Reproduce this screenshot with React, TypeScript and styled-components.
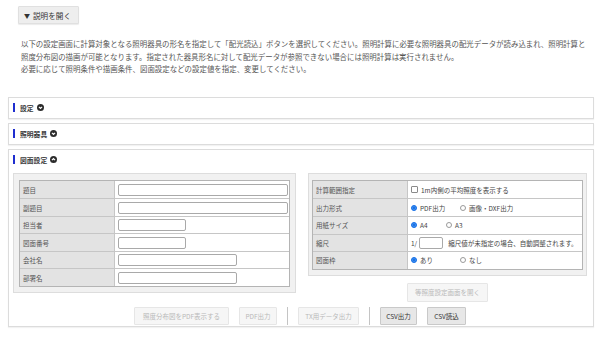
import styled, { createGlobalStyle } from 'styled-components';

const GlobalStyle = createGlobalStyle`
  * { box-sizing: border-box; }
  body {
    margin: 0;
    background: #fff;
    font-family: "Noto Sans CJK JP", "Noto Sans", sans-serif;
    color: #444;
  }
`;

const ChevronCircle = ({ up }: { up?: boolean }) => (
  <svg width="7" height="7" viewBox="0 0 8 8">
    <circle cx="4" cy="4" r="4" fill="#2b2b2b" />
    <polyline
      points={up ? '2.2,4.8 4,3 5.8,4.8' : '2.2,3.2 4,5 5.8,3.2'}
      fill="none"
      stroke="#fff"
      strokeWidth="1.3"
    />
  </svg>
);

const Page = styled.div`
  padding-top: 6px;
`;

const ToggleButton = styled.button`
  display: flex;
  align-items: center;
  gap: 3px;
  margin-left: 18px;
  width: 61px;
  height: 18px;
  padding: 0 0 0 5px;
  border: 1px solid #e0e0e0;
  border-radius: 1px;
  background: #eeeeee;
  box-shadow: 0 1px 1px rgba(0, 0, 0, 0.08);
  font-family: inherit;
  font-size: 7.6px;
  color: #333;
`;

const Arrow = styled.span`
  font-size: 6px;
`;

const Description = styled.p`
  margin: 14px 0 21px 21px;
  font-size: 7.45px;
  line-height: 12.6px;
  color: #555;
  white-space: nowrap;
`;

const Panel = styled.section`
  margin: 0 6px 4px 8px;
  border: 1px solid #dcdcdc;
  background: #fff;
  box-shadow: 0 1px 1px rgba(0, 0, 0, 0.05);
`;

const PanelHeader = styled.div`
  display: flex;
  align-items: center;
  height: 20px;
  padding-left: 4px;
`;

const Bar = styled.span`
  width: 2px;
  height: 9px;
  margin-right: 5px;
  background: #1f2ecf;
`;

const PanelTitle = styled.span`
  font-size: 6.8px;
  font-weight: 700;
  color: #3a3a3a;
  margin-right: 3px;
`;

const PanelBody = styled.div`
  padding: 3px 6px 1px 4px;
`;

const Columns = styled.div`
  display: grid;
  grid-template-columns: 283px 279px;
  column-gap: 12px;
  align-items: start;
`;

const Column = styled.div`
  display: flex;
  flex-direction: column;
  align-items: center;
`;

const GroupBox = styled.div<{ $inset: number }>`
  width: 100%;
  padding: 6px ${p => p.$inset}px 5px;
  background: #f1f1f1;
  border: 1px solid #dddddd;
`;

const FormTable = styled.div`
  border: 1px solid #b4b4b4;
  background: #fff;
`;

const FormRow = styled.div<{ $h: number }>`
  display: grid;
  grid-template-columns: 95px 1fr;
  height: ${p => p.$h}px;
  & + & {
    border-top: 1px solid #c6c6c6;
  }
`;

const Label = styled.div`
  display: flex;
  align-items: center;
  padding-left: 3px;
  background: #e3e3e3;
  border-right: 1px solid #c6c6c6;
  font-size: 6.5px;
  color: #555;
`;

const Value = styled.div`
  display: flex;
  align-items: center;
  padding-left: 3px;
  font-size: 6.5px;
  color: #444;
`;

const TextInput = styled.span<{ $w: number }>`
  display: block;
  width: ${p => p.$w}px;
  height: 12px;
  background: #fff;
  border: 1px solid #a9a9a9;
  border-radius: 2px;
`;

const Option = styled.span<{ $w?: number }>`
  display: inline-flex;
  align-items: center;
  gap: 3px;
  min-width: ${p => p.$w ?? 0}px;
  color: #444;
`;

const Radio = styled.span<{ $on?: boolean }>`
  width: 6px;
  height: 6px;
  border-radius: 50%;
  border: 1px solid ${p => (p.$on ? '#1a73e8' : '#9a9a9a')};
  background: ${p => (p.$on ? '#1a73e8' : '#fff')};
  box-shadow: ${p => (p.$on ? 'inset 0 0 0 0.6px #5aa0f0' : 'none')};
`;

const Check = styled.span`
  width: 7px;
  height: 7px;
  border: 1px solid #8a8a8a;
  border-radius: 1px;
  background: #fff;
`;

const Scale = styled.span`
  margin-right: 2px;
`;

const Hint = styled.span`
  margin-left: 5px;
`;

const Button = styled.button<{ $w: number; $h?: number; $off?: boolean }>`
  width: ${p => p.$w}px;
  height: ${p => p.$h ?? 18}px;
  padding: 0;
  font-family: inherit;
  font-size: 6.5px;
  border-radius: 1px;
  border: 1px solid ${p => (p.$off ? '#e6e6e6' : '#c9c9c9')};
  background: ${p => (p.$off ? '#f6f6f6' : '#e7e7e7')};
  color: ${p => (p.$off ? '#b9b9b9' : '#333')};
`;

const SubButton = styled(Button)`
  margin-top: 7px;
`;

const ActionRow = styled.div`
  display: flex;
  justify-content: center;
  align-items: center;
  gap: 10px;
  margin-top: 5px;
`;

const Divider = styled.span`
  width: 1px;
  height: 18px;
  background: #c4c4c4;
`;

const leftRows: { label: string; w: number }[] = [
  { label: '題目', w: 170 },
  { label: '副題目', w: 170 },
  { label: '担当者', w: 68 },
  { label: '図面番号', w: 68 },
  { label: '会社名', w: 119 },
  { label: '部署名', w: 119 },
];

export default function App() {
  return (
    <Page>
      <GlobalStyle />
      <ToggleButton>
        <Arrow>▼</Arrow>説明を開く
      </ToggleButton>

      <Description>
        以下の設定画面に計算対象となる照明器具の形名を指定して「配光読込」ボタンを選択してください。照明計算に必要な照明器具の配光データが読み込まれ、照明計算と
        <br />
        照度分布図の描画が可能となります。指定された器具形名に対して配光データが参照できない場合には照明計算は実行されません。
        <br />
        必要に応じて照明条件や描画条件、図面設定などの設定値を指定、変更してください。
      </Description>

      <Panel>
        <PanelHeader>
          <Bar />
          <PanelTitle>設定</PanelTitle>
          <ChevronCircle />
        </PanelHeader>
      </Panel>

      <Panel>
        <PanelHeader>
          <Bar />
          <PanelTitle>照明器具</PanelTitle>
          <ChevronCircle />
        </PanelHeader>
      </Panel>

      <Panel>
        <PanelHeader>
          <Bar />
          <PanelTitle>図面設定</PanelTitle>
          <ChevronCircle up />
        </PanelHeader>
        <PanelBody>
          <Columns>
            <Column>
              <GroupBox $inset={5}>
                <FormTable>
                  {leftRows.map(row => (
                    <FormRow key={row.label} $h={17.5}>
                      <Label>{row.label}</Label>
                      <Value>
                        <TextInput $w={row.w} />
                      </Value>
                    </FormRow>
                  ))}
                </FormTable>
              </GroupBox>
            </Column>

            <Column>
              <GroupBox $inset={3}>
                <FormTable>
                  <FormRow $h={17.6}>
                    <Label>計算範囲指定</Label>
                    <Value>
                      <Option>
                        <Check />
                        1m内側の平均照度を表示する
                      </Option>
                    </Value>
                  </FormRow>
                  <FormRow $h={17.6}>
                    <Label>出力形式</Label>
                    <Value>
                      <Option $w={49}>
                        <Radio $on />
                        PDF出力
                      </Option>
                      <Option>
                        <Radio />
                        画像・DXF出力
                      </Option>
                    </Value>
                  </FormRow>
                  <FormRow $h={17.6}>
                    <Label>用紙サイズ</Label>
                    <Value>
                      <Option $w={35}>
                        <Radio $on />
                        A4
                      </Option>
                      <Option>
                        <Radio />
                        A3
                      </Option>
                    </Value>
                  </FormRow>
                  <FormRow $h={17.6}>
                    <Label>縮尺</Label>
                    <Value>
                      <Scale>1/</Scale>
                      <TextInput $w={24} />
                      <Hint>縮尺値が未指定の場合、自動調整されます。</Hint>
                    </Value>
                  </FormRow>
                  <FormRow $h={17.6}>
                    <Label>図面枠</Label>
                    <Value>
                      <Option $w={49}>
                        <Radio $on />
                        あり
                      </Option>
                      <Option>
                        <Radio />
                        なし
                      </Option>
                    </Value>
                  </FormRow>
                </FormTable>
              </GroupBox>
              <SubButton $w={81} $h={19} $off>
                等照度設定画面を開く
              </SubButton>
            </Column>
          </Columns>

          <ActionRow>
            <Button $w={95} $off>照度分布図をPDF表示する</Button>
            <Button $w={38} $off>PDF出力</Button>
            <Divider />
            <Button $w={61} $off>TX用データ出力</Button>
            <Divider />
            <Button $w={37}>CSV出力</Button>
            <Button $w={39}>CSV読込</Button>
          </ActionRow>
        </PanelBody>
      </Panel>
    </Page>
  );
}
